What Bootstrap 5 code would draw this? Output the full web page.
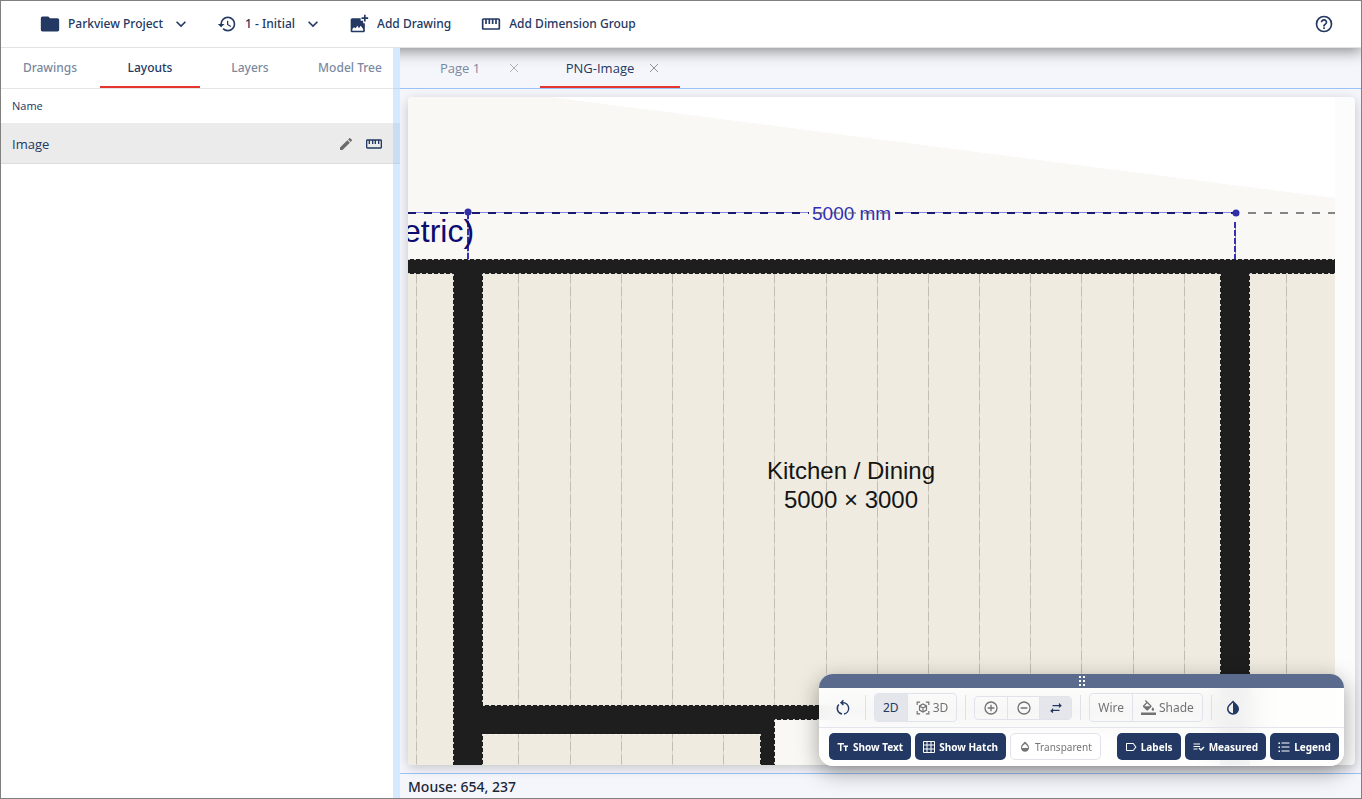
<!DOCTYPE html>
<html lang="en">
<head>
<meta charset="utf-8">
<meta name="viewport" content="width=device-width, initial-scale=1">
<title>Parkview Project</title>
<link href="https://cdn.jsdelivr.net/npm/bootstrap@5.3.0/dist/css/bootstrap.min.css" rel="stylesheet">
<style>
:root { --navy: #233862; --muted: #7b899f; --accent: #e6352f; --line: #e4e6ea; --sky: #9ac3f7; }
body { font-family: "Open Sans", "Noto Sans", sans-serif; font-size: 13px; line-height: 20px; color: var(--navy); background: #f4f6fb; }
body::after { content: ""; position: fixed; inset: 0; border: 1px solid #808080; pointer-events: none; z-index: 50; }
svg { display: block; flex: none; }
.ico { fill: currentColor; }
.line-ico { fill: none; stroke: currentColor; stroke-width: 2; }
button { font: inherit; color: inherit; background: none; border: 0; padding: 0; }
.topbar, .sidebar .strip, .tools, .status { font-family: "Noto Sans", "Open Sans", sans-serif; }
.topbar { height: 48px; gap: 26px; padding: 0 28px 0 40px; background: #fff; border-bottom: 1px solid #e2e3e6; box-shadow: 0 3px 14px rgba(0,0,0,.45); z-index: 1; font-size: 12px; }
.topbar button { font-weight: 500; display: flex; align-items: center; gap: 8px; white-space: nowrap; }
.sidebar { width: 400px; background: #fff; z-index: 2; }
.splitter { position: absolute; top: 0; bottom: 0; right: 0; width: 7px; background: rgba(150,200,255,.4); }
.strip { height: 41px; border-bottom: 1px solid var(--line); }
.strip button { height: 40px; padding-top: 2px; color: var(--muted); border-bottom: 2px solid transparent; }
.strip button.active { color: var(--navy); border-color: var(--accent); }
.sidebar .strip button { width: 100px; font-size: 12px; font-weight: 500; }
.workspace .strip { border-color: var(--sky); }
.workspace .strip .doc { width: 140px; height: 40px; border-bottom: 2px solid transparent; padding-top: 2px; }
.workspace .strip .doc.active { border-color: var(--accent); }
.workspace .strip .doc button { height: auto; border: 0; padding: 0; }
.workspace .strip .doc .doc-name { width: 88px; text-align: center; }
.list-head { height: 34px; font-size: 11px; font-weight: 400; padding: 0 12px; vertical-align: middle; }
.list-row td { height: 40px; background: #ebebeb; border-bottom: 1px solid #dcdcdc; padding: 2px 12px 0; vertical-align: middle; }
.row-tools { gap: 12px; padding-right: 6px; }
.sheet { margin: 8px 7px 8px 8px; border-radius: 4px; background: #fcfcfc; box-shadow: 0 3px 12px rgba(0,0,0,.2); }
.sheet > svg { border-radius: 4px; width: 100%; height: 100%; position: absolute; inset: 0; }
.status { height: 26px; border-top: 1px solid var(--sky); padding: 2px 8px; font-size: 14px; font-weight: 500; color: #1b2638; line-height: 22px; }
.palette { position: absolute; right: 11px; bottom: -1px; width: 525px; border-radius: 14px; overflow: hidden; background: rgba(255,255,255,.92); backdrop-filter: blur(14px); }
.palette-shadow { position: absolute; right: 11px; bottom: -1px; width: 525px; height: 92px; border-radius: 14px; box-shadow: 0 6px 22px rgba(0,0,0,.36); }
.grip { height: 14px; background: #5b6b8e; }
.tools { height: 39px; padding: 0 10px; color: #727272; font-size: 12px; }
.tools + .tools { border-top: 1px solid #e3e5ec; padding-bottom: 1px; font-size: 10px; gap: 4px; }
.sep { width: 1px; height: 25px; background: #dfe1ea; margin: 0 8px; }
.tools + .tools .sep { margin: 0 4px; }
.seg { display: flex; height: 29px; border: 1px solid #e1e3ec; border-radius: 4px; overflow: hidden; }
.seg button { display: flex; align-items: center; justify-content: center; gap: 3px; }
.seg button + button { border-left: 1px solid #e1e3ec; }
.seg .active { background: #e4e6eb; color: var(--navy); }
.seg.low { height: 24px; }
.seg.low button { width: 32px; }
.chip { display: flex; align-items: center; justify-content: center; gap: 4px; height: 27px; border-radius: 5px; background: var(--navy); color: #fff; font-weight: 700; white-space: nowrap; }
.chip.off { background: #fff; color: #757575; border: 1px solid #e1e3ec; font-weight: 400; }
.plan text { font-family: "Liberation Sans", Arial, sans-serif; }
</style>
</head>
<body class="vh-100 d-flex flex-column overflow-hidden">
<header class="topbar d-flex align-items-center flex-shrink-0 position-relative">
  <button type="button"><svg class="ico" width="20" height="20" viewBox="0 0 24 24"><path d="M10 3H3C1.900 3 1 3.900 1 5v14c0 1.100.9 2 2 2h18c1.100 0 2-.9 2-2V7c0-1.100-.9-2-2-2h-9z"/></svg>Parkview Project<svg class="ico" width="20" height="20" viewBox="0 0 24 24"><path d="M16.600 8.600 12 13.200 7.400 8.600 6 10l6 6 6-6z"/></svg></button>
  <button type="button"><svg class="ico" width="20" height="20" viewBox="0 0 24 24"><path d="M13 3a9 9 0 0 0-9 9H1l3.890 3.890.07.14L9 12H6c0-3.870 3.130-7 7-7s7 3.130 7 7-3.130 7-7 7c-1.930 0-3.680-.79-4.940-2.060l-1.420 1.420A8.950 8.950 0 0 0 13 21a9 9 0 0 0 0-18zm-1 5v5l4.280 2.540.72-1.210-3.500-2.080V8z"/></svg>1 - Initial<svg class="ico" width="20" height="20" viewBox="0 0 24 24"><path d="M16.600 8.600 12 13.200 7.400 8.600 6 10l6 6 6-6z"/></svg></button>
  <button type="button"><svg class="ico" width="20" height="20" viewBox="0 0 24 24"><path fill-rule="evenodd" d="M4 5h10v3h3v3h2v9c0 1.100-.9 2-2 2H4c-1.100 0-2-.9-2-2V7c0-1.100.9-2 2-2zm0 15h13v-2l-3-4-2 3-2-3-2 3-2-1-2 2z"/><path d="M18 1h2v3h3v2h-3v3h-2V6h-3V4h3z"/></svg>Add Drawing</button>
  <button type="button" class="ps-1"><svg class="ico" width="20" height="20" viewBox="0 0 24 24"><path d="M21 5H3c-1.100 0-2 .9-2 2v10c0 1.100.9 2 2 2h18c1.100 0 2-.9 2-2V7c0-1.100-.9-2-2-2zm0 12H3V7h2v5h2V7h2v5h2V7h2v5h2V7h2v5h2V7h2z"/></svg>Add Dimension Group</button>
  <button type="button" class="ms-auto" aria-label="Help"><svg class="ico" width="20" height="20" viewBox="0 0 24 24"><path d="M11 18h2v-2h-2zm1-16a10 10 0 1 0 0 20 10 10 0 0 0 0-20zm0 18a8 8 0 1 1 0-16 8 8 0 0 1 0 16zm0-14c-2.210 0-4 1.790-4 4h2c0-1.100.9-2 2-2s2 .9 2 2c0 2-3 1.750-3 5h2c0-2.250 3-2.500 3-5 0-2.210-1.790-4-4-4z"/></svg></button>
</header>
<div class="d-flex flex-grow-1">
  <aside class="sidebar position-relative flex-shrink-0">
    <nav class="strip d-flex">
      <button type="button">Drawings</button><button type="button" class="active">Layouts</button><button type="button">Layers</button><button type="button">Model Tree</button>
    </nav>
    <table class="w-100">
      <thead><tr><th class="list-head" scope="col" colspan="2">Name</th></tr></thead>
      <tbody><tr class="list-row"><td>Image</td><td>
        <div class="row-tools d-flex justify-content-end align-items-center">
          <button type="button" aria-label="Edit" style="color:#6b6b6b"><svg class="ico" width="16" height="16" viewBox="0 0 24 24"><path d="M3 17.250V21h3.750L17.810 9.940l-3.750-3.750zM20.710 7.040a1 1 0 0 0 0-1.410l-2.340-2.340a1 1 0 0 0-1.410 0l-1.830 1.830 3.750 3.750z"/></svg></button>
          <button type="button" aria-label="Dimensions"><svg class="ico" width="16" height="16" viewBox="0 0 24 24"><path d="M22 5H2C1 5 0 6 0 7v10c0 1 1 2 2 2h20c1 0 2-1 2-2V7c0-1-1-2-2-2zm0 12H2V7h2v5h2V7h3v5h2V7h2v5h2V7h3v5h2V7h2z"/></svg></button>
        </div></td></tr></tbody>
    </table>
    <div class="splitter"></div>
  </aside>
  <main class="workspace flex-grow-1 d-flex flex-column">
    <nav class="strip d-flex flex-shrink-0">
      <div class="doc d-flex align-items-center ps-3"><button type="button" class="doc-name">Page 1</button><button type="button" aria-label="Close Page 1"><svg class="line-ico" width="20" height="20" viewBox="0 0 20 20"><path d="M6 6l8 8M14 6l-8 8" stroke="#aeb2ba" stroke-width="1"/></svg></button></div>
      <div class="doc active d-flex align-items-center ps-3"><button type="button" class="doc-name active">PNG-Image</button><button type="button" aria-label="Close PNG-Image"><svg class="line-ico" width="20" height="20" viewBox="0 0 20 20"><path d="M6 6l8 8M14 6l-8 8" stroke="#8d929c" stroke-width="1"/></svg></button></div>
    </nav>
    <section class="sheet flex-grow-1 position-relative">
      <svg class="plan" role="img" aria-label="Floor plan">
        <rect width="927" height="668" fill="#f9f8f4"/>
        <path d="M142 0 927 101V0z" fill="#fff"/>
        <path d="M0 177h927v491H0z" fill="#efebe0"/>
        <g fill="none" stroke="#d9d5ca">
          <path id="boards" d="M8.500 177v491M110.500 177v491M162.500 177v491M213.500 177v491M264.500 177v491M315.500 177v491M366.500 177v491M418.500 177v491M469.500 177v491M520.500 177v491M571.500 177v491M622.500 177v491M673.500 177v491M725.500 177v491M776.500 177v491M878.500 177v491"/>
          <use href="#boards" stroke="#c2beb3" stroke-dasharray="9 4"/>
        </g>
        <path d="M367 623h445v45H367z" fill="#f9f8f4"/>
        <path d="M0 162h927v15h-85v491h-30V623H367v45h-15v-31H75v31H45V177H0zM75 177v431h737V177z" fill="#1e1e1e" fill-rule="evenodd"/>
        <path d="M0 162.500h927M0 176.500h45M75 176.500h737M842 176.500h85M75 608.500h737M75 637.500h277M367 622.500h445M45.500 177v491M74.500 177v431M74.500 637v31M812.500 177v431M841.500 177v491M352.500 637v31M366.500 623v45" fill="none" stroke="#fff" stroke-dasharray="2 4" stroke-opacity=".8"/>
        <path d="M840 116h87" stroke="#858585" stroke-width="2" stroke-dasharray="8 8"/>
        <path d="M0 115.500h401M487 115.500h341M60 116v46M827.500 125v37" fill="none" stroke="#8b89e0"/>
        <path d="M0 116h401M487 116h341" stroke="#19196f" stroke-width="2" stroke-dasharray="8 8"/>
        <path d="M60 116v46M827 125v37" stroke="#3431b4" stroke-width="2" stroke-dasharray="6 2"/>
        <circle cx="60" cy="115" r="3.500" fill="#302ea9"/><circle cx="828" cy="116" r="3.500" fill="#302ea9"/>
        <text x="-5" y="145" font-size="32" fill="#0b0b70">etric)</text>
        <text x="404" y="123" font-size="19" fill="#302eb8">5000 mm</text>
        <path d="M408 116h75" stroke="#555" stroke-dasharray="8 8"/>
        <g font-size="24" fill="#151515" text-anchor="middle"><text x="443" y="382">Kitchen / Dining</text><text x="443" y="411">5000 × 3000</text></g>
      </svg>
      <div class="palette-shadow"></div>
      <div class="palette">
        <div class="grip d-flex align-items-center justify-content-center"><svg width="8" height="10" viewBox="0 0 8 10" fill="#fff"><path d="M1 0h2v2H1zm4 0h2v2H5zM1 4h2v2H1zm4 0h2v2H5zM1 8h2v2H1zm4 0h2v2H5z"/></svg></div>
        <div class="tools d-flex align-items-center">
          <button type="button" aria-label="Reset view" class="ms-1 me-1" style="color:var(--navy)"><svg class="line-ico" width="20" height="20" viewBox="0 0 20 20"><path d="M5.800 6.500a5.700 5.700 0 0 0 3.200 9.500M11 16a5.700 5.700 0 0 0-.8-11.300H8M10.400 2.300 8 4.700l2.400 2.400" stroke-width="1.400"/></svg></button>
          <span class="sep"></span>
          <div class="seg"><button type="button" class="active px-2">2D</button><button type="button" class="px-2"><svg class="line-ico" width="14" height="14" viewBox="0 0 24 24"><path d="M2 7V2h5M17 2h5v5M22 17v5h-5M7 22H2v-5M12 5l6 3.500v7L12 19l-6-3.500v-7zM6 8.500l6 3.500 6-3.500M12 12v7"/></svg>3D</button></div>
          <span class="sep"></span>
          <div class="seg low">
            <button type="button" aria-label="Zoom in"><svg class="line-ico" width="16" height="16" viewBox="0 0 24 24"><circle cx="12" cy="12" r="9"/><path d="M12 7v10M7 12h10"/></svg></button>
            <button type="button" aria-label="Zoom out"><svg class="line-ico" width="16" height="16" viewBox="0 0 24 24"><circle cx="12" cy="12" r="9"/><path d="M7 12h10"/></svg></button>
            <button type="button" class="active" aria-label="Swap"><svg class="ico" width="14" height="14" viewBox="0 0 24 24"><path d="m17 12 5-4-5-5v4H6v2h11zM7 12l-5 5 5 4v-4h11v-2H7z"/></svg></button>
          </div>
          <span class="sep"></span>
          <div class="seg"><button type="button" class="px-2">Wire</button><button type="button" class="px-2"><svg class="ico" width="15" height="15" viewBox="0 0 24 24"><path d="M16.560 8.940 7.620 0 6.210 1.410l2.380 2.380-5.150 5.150c-.59.59-.59 1.540 0 2.120l5.500 5.500c.6.590 1.530.590 2.120 0l5.500-5.500c.59-.58.59-1.530 0-2.120zM5.210 10 10 5.210 14.790 10zM19 11.500s-2 2.170-2 3.500a2 2 0 0 0 4 0c0-1.330-2-3.500-2-3.500zM0 20h24v4H0z"/></svg>Shade</button></div>
          <span class="sep"></span>
          <button type="button" aria-label="Invert colours" class="ms-1" style="color:var(--navy)"><svg class="ico" width="18" height="18" viewBox="0 0 24 24"><path d="M12 4.810V19c-3.310 0-6-2.630-6-5.870 0-1.560.62-3.030 1.750-4.140zM6.350 7.560A7.800 7.800 0 0 0 4 13.130C4 17.480 7.580 21 12 21s8-3.520 8-7.870c0-2.170-.9-4.140-2.350-5.570L12 2z"/></svg></button>
        </div>
        <div class="tools d-flex align-items-center">
          <button type="button" class="chip px-2"><svg class="ico" width="12" height="12" viewBox="0 0 24 24"><path d="M1 4v3h5v13h3V7h5V4zm21 5h-9v3h3v8h3v-8h3z"/></svg>Show Text</button>
          <button type="button" class="chip px-2"><svg class="line-ico" width="12" height="12" viewBox="0 0 12 12"><path d="M.5.5h11v11H.5zM4 .5v11M8 .5v11M.5 4h11M.5 8h11" stroke-width="1"/></svg>Show Hatch</button>
          <button type="button" class="chip off px-2"><svg class="ico" width="12" height="12" viewBox="0 0 24 24"><path d="M17.660 7 12 1 6.340 7A8 8 0 0 0 4 13.640c0 5 3.600 8 8 8s8-3 8-8c0-2.500-.8-5-2.340-6.640zM6 14c0-2 .62-3.270 1.760-4.400L12 5.270l4.240 4.380C17.400 10.800 18 12 18 14z"/></svg>Transparent</button>
          <span class="sep"></span>
          <button type="button" class="chip px-2"><svg class="ico" width="12" height="12" viewBox="0 0 24 24"><path d="M17.600 4.900C17.200 4.300 16.700 4 16 4H4C2.900 4 2 4.900 2 6v12c0 1.100.9 2 2 2h12c.7 0 1.300-.3 1.600-.9L23 12zM16 18H4V6h12l4.500 6z"/></svg>Labels</button>
          <button type="button" class="chip px-2"><svg class="ico" width="12" height="12" viewBox="0 0 24 24"><path d="M1 5h13v2H1zm0 5h13v2H1zm0 5h8v2H1zm20-4-5 5-3-3-2 2 5 5 7-7z"/></svg>Measured</button>
          <button type="button" class="chip px-2"><svg class="ico" width="12" height="12" viewBox="0 0 24 24"><path d="M1 3h3v3H1zm0 8h3v3H1zm0 8h3v3H1zM7 3h16v2H7zm0 8h16v2H7zm0 8h16v2H7z"/></svg>Legend</button>
        </div>
      </div>
    </section>
    <footer class="status flex-shrink-0">Mouse: 654, 237</footer>
  </main>
</div>
<script src="https://cdn.jsdelivr.net/npm/bootstrap@5.3.0/dist/js/bootstrap.bundle.min.js"></script>
</body>
</html>
